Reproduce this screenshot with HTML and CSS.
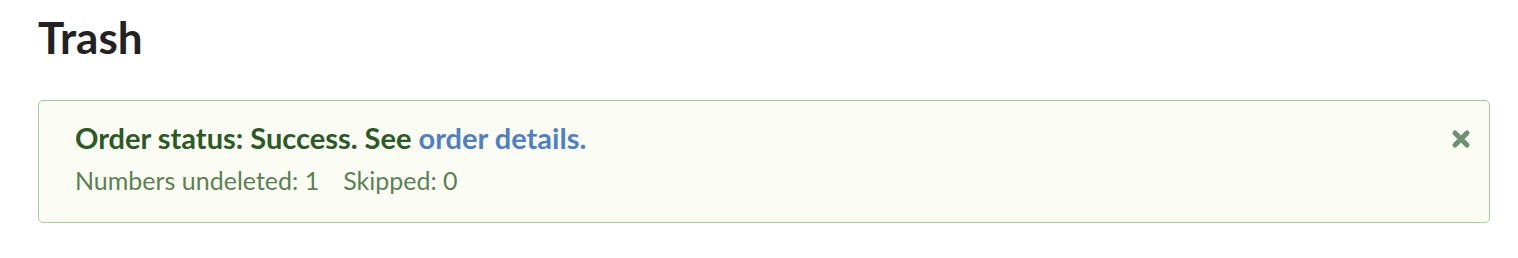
FILE: index.html
```html
<!DOCTYPE html>
<html lang="en">
<head>
<meta charset="utf-8">
<title>Trash</title>
<link rel="stylesheet" href="styles.css">
</head>
<body>
<main class="page">
  <h1 class="title">Trash</h1>
  <div class="alert">
    <div class="alert-body">
      <p class="alert-heading">Order status: Success. See <a class="alert-link" href="#">order details.</a></p>
      <p class="alert-stats"><span>Numbers undeleted: 1</span><span>Skipped: 0</span></p>
    </div>
    <button class="alert-close" type="button" aria-label="Close">
      <svg viewBox="0 0 20 20" width="20" height="20" aria-hidden="true">
        <path d="M4 4 L16 16 M16 4 L4 16" stroke="currentColor" stroke-width="5" stroke-linecap="round"/>
      </svg>
    </button>
  </div>
</main>
</body>
</html>
```

FILE: styles.css
```css
* { box-sizing: border-box; }
html, body { margin: 0; padding: 0; background: #ffffff; }
body { font-family: Lato, "Open Sans", sans-serif; }
.page { padding: 11px 28px 0 38px; }
.title {
  margin: 0;
  font-size: 44px;
  line-height: 52px;
  font-weight: 700;
  color: #222222;
}
.alert {
  margin-top: 37px;
  height: 123px;
  display: flex;
  justify-content: space-between;
  align-items: flex-start;
  border: 1.5px solid #a9c99b;
  border-radius: 5px;
  background: #fbfdf4;
  padding: 19px 18px 0 36px;
}
.alert-body p { margin: 0; }
.alert-heading {
  font-size: 29px;
  line-height: 36px;
  font-weight: 700;
  color: #2b5a26;
}
.alert-link { color: #4f80c4; text-decoration: none; }
.alert-stats {
  margin-top: 9px !important;
  font-size: 25px;
  line-height: 30px;
  color: #5a8152;
  display: flex;
  gap: 24px;
}
.alert-close {
  margin-top: 9px;
  padding: 0;
  border: 0;
  background: none;
  color: #6d9070;
  display: flex;
}
```
